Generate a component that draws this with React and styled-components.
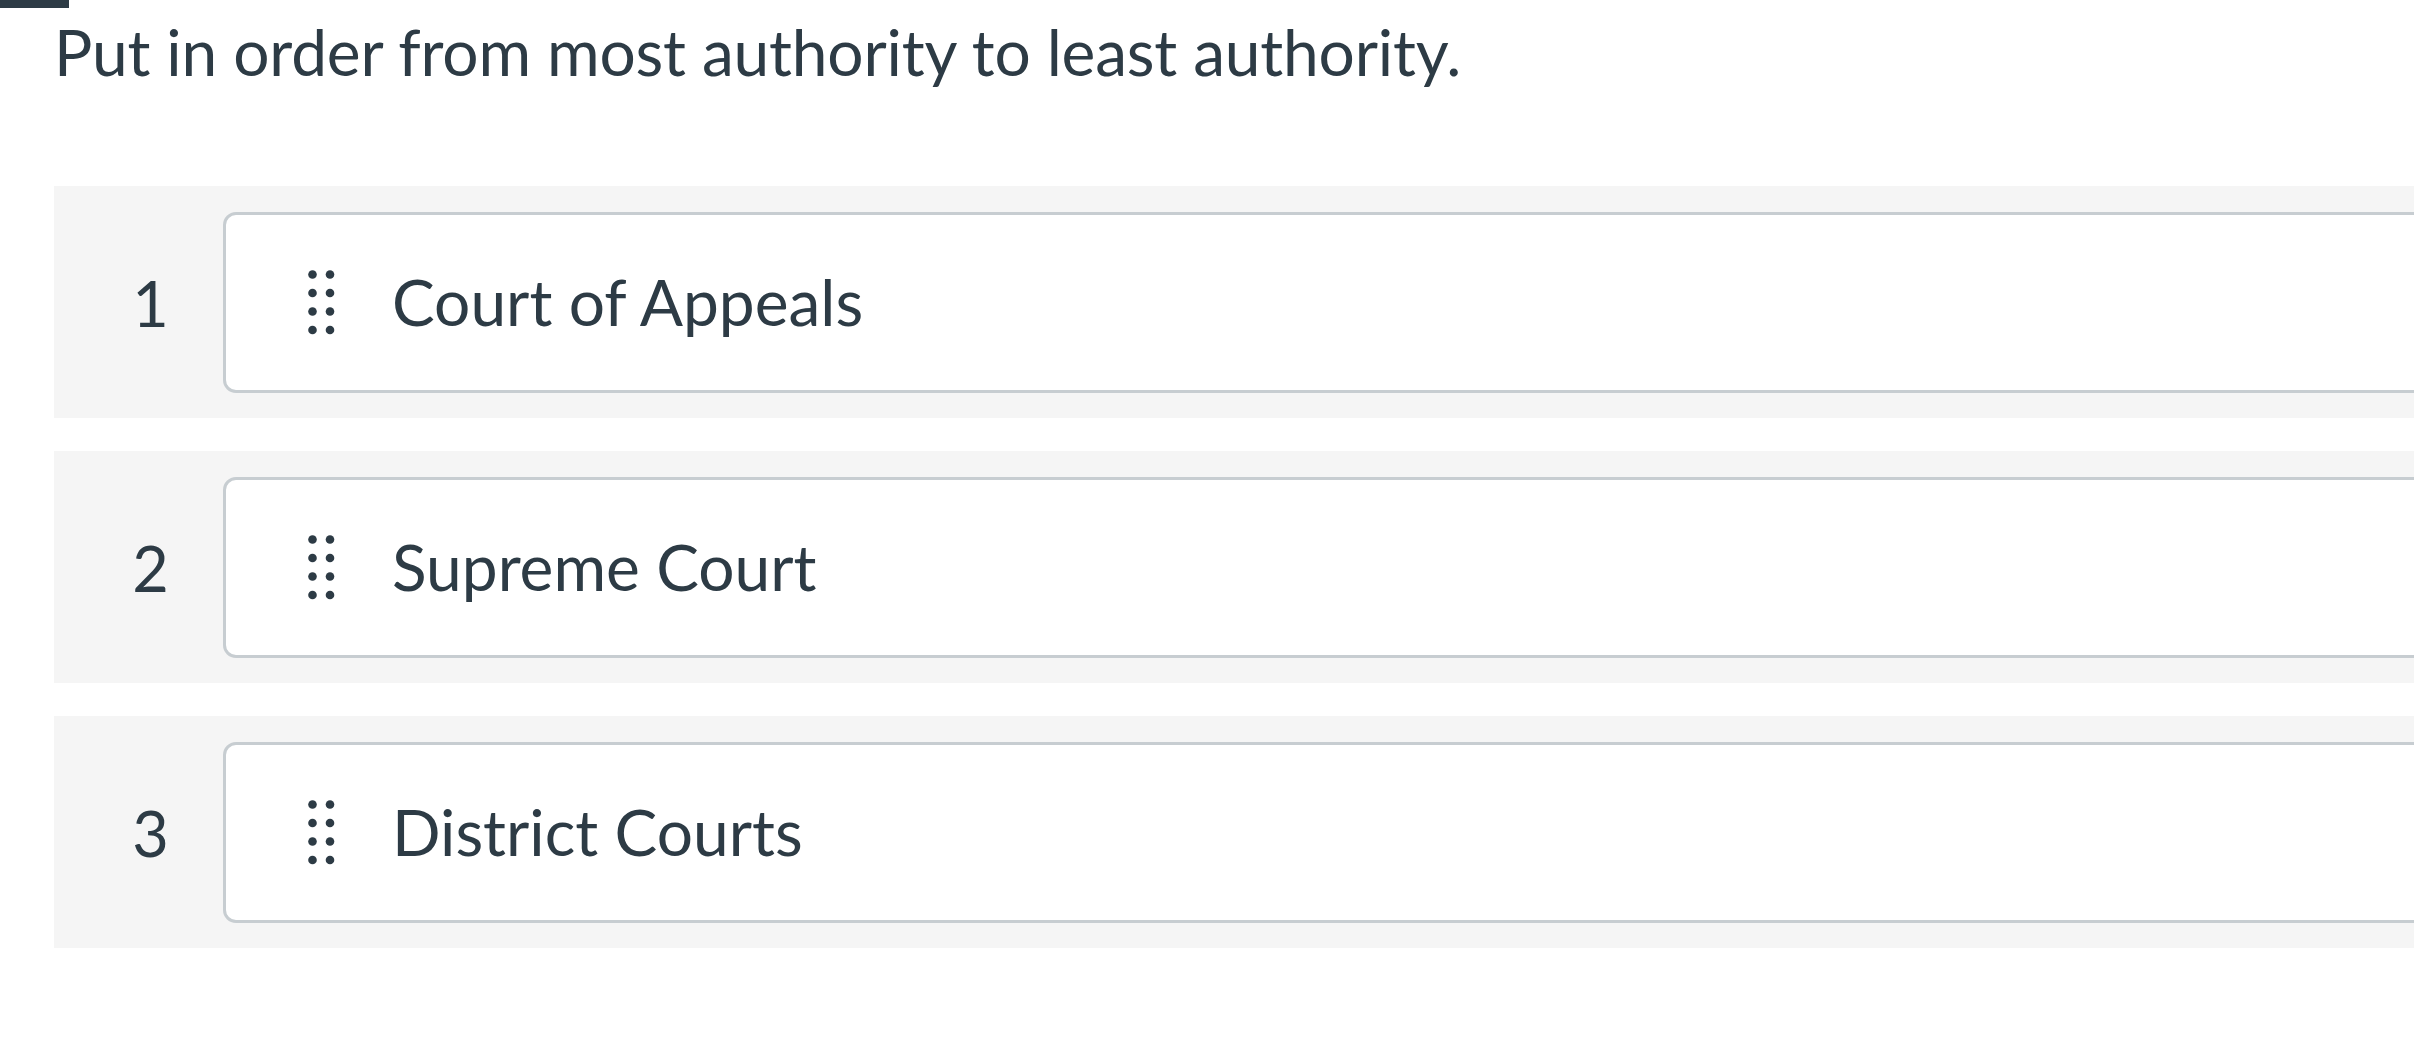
import React from "react";
import styled, { createGlobalStyle } from "styled-components";

const Global = createGlobalStyle`
  html, body {
    margin: 0;
    padding: 0;
    background: #ffffff;
    overflow: hidden;
  }
  body {
    font-family: Lato, "Noto Sans", "Liberation Sans", sans-serif;
    color: #2d3b45;
  }
`;

const Page = styled.div`
  width: 2414px;
  height: 1046px;
  overflow: hidden;
  position: relative;
`;

const TopMark = styled.div`
  width: 69px;
  height: 8px;
  background: #2d3b45;
`;

const Content = styled.div`
  padding-left: 54px;
`;

const Question = styled.p`
  margin: 6px 0 0 0;
  font-size: 64px;
  line-height: 1.2;
  letter-spacing: -0.2px;
  color: #2d3b45;
  white-space: nowrap;
`;

const List = styled.ol`
  list-style: none;
  margin: 95px 0 0 0;
  padding: 0;
  width: 2600px;
  display: flex;
  flex-direction: column;
  gap: 33px;
`;

const Row = styled.li`
  display: flex;
  align-items: center;
  height: 232px;
  box-sizing: border-box;
  padding: 26px 0 25px 0;
  background: #f5f5f5;
`;

const Index = styled.span`
  width: 169px;
  flex: none;
  box-sizing: border-box;
  padding-left: 24px;
  text-align: center;
  font-size: 63px;
  line-height: 1.2;
  color: #2d3b45;
`;

const Card = styled.div`
  flex: 1;
  height: 100%;
  box-sizing: border-box;
  display: flex;
  align-items: center;
  gap: 57px;
  padding-left: 82px;
  background: #ffffff;
  border: 3px solid #c7cdd1;
  border-radius: 13px;
`;

const Label = styled.span`
  font-size: 64px;
  line-height: 1.2;
  color: #2d3b45;
  white-space: nowrap;
`;

const Handle = () => (
  <svg width="27" height="65" viewBox="0 0 27 65" aria-hidden="true">
    {[4.5, 23, 41.5, 60].map((cy) =>
      [4.5, 22].map((cx) => (
        <circle key={`${cx}-${cy}`} cx={cx} cy={cy} r="4.3" fill="#2d3b45" />
      ))
    )}
  </svg>
);

const items = ["Court of Appeals", "Supreme Court", "District Courts"];

export default function App() {
  return (
    <Page>
      <Global />
      <TopMark />
      <Content>
        <Question>Put in order from most authority to least authority.</Question>
        <List>
          {items.map((item, i) => (
            <Row key={item}>
              <Index>{i + 1}</Index>
              <Card>
                <Handle />
                <Label>{item}</Label>
              </Card>
            </Row>
          ))}
        </List>
      </Content>
    </Page>
  );
}
